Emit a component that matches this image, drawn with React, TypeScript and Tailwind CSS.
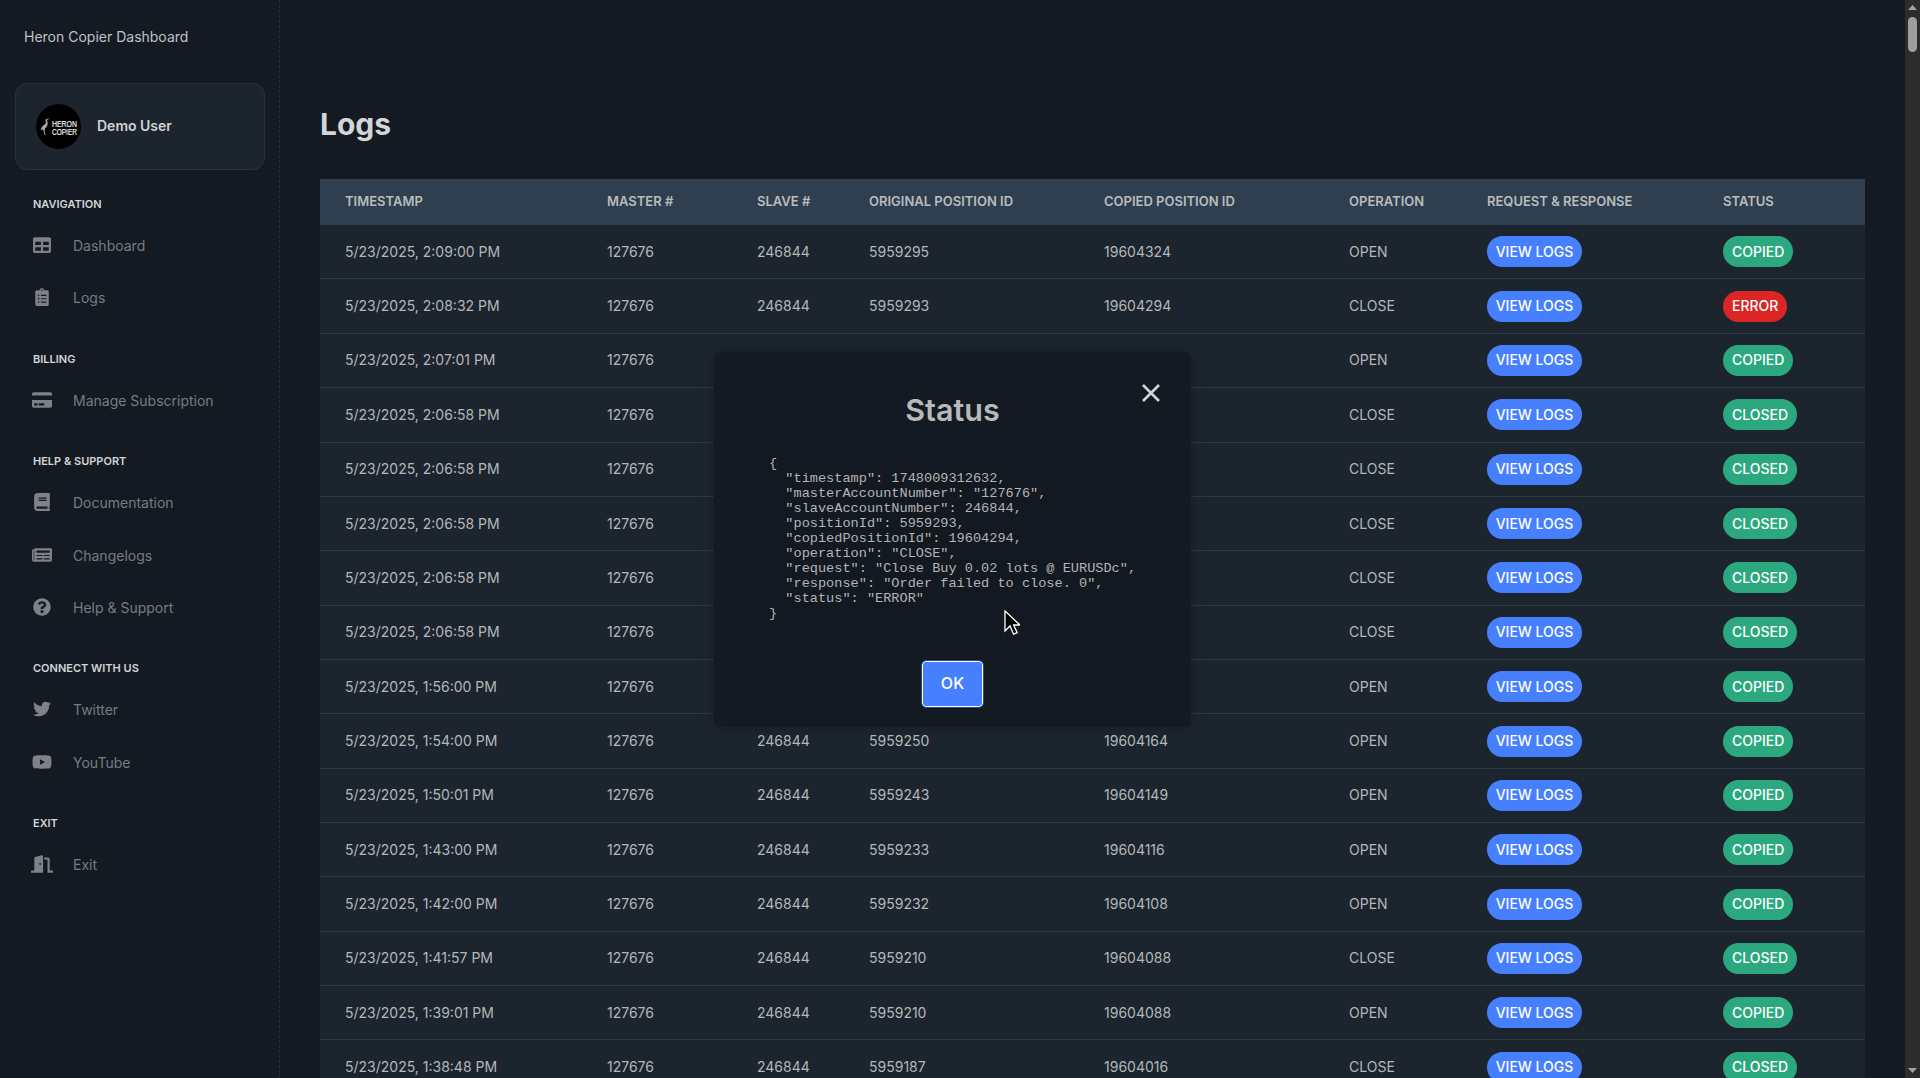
import type { ReactNode } from "react";
import {
  FaBook,
  FaClipboardList,
  FaCreditCard,
  FaDoorOpen,
  FaNewspaper,
  FaQuestionCircle,
  FaTable,
  FaTwitter,
  FaYoutube,
} from "react-icons/fa";

type Status = "COPIED" | "CLOSED" | "ERROR";
type Row = [string, string, string, string, string, Status];

// rows 3-9 sit behind the modal, so their middle cells stay empty
const rows: Row[] = [
  ["5/23/2025, 2:09:00 PM", "246844", "5959295", "19604324", "OPEN", "COPIED"],
  ["5/23/2025, 2:08:32 PM", "246844", "5959293", "19604294", "CLOSE", "ERROR"],
  ["5/23/2025, 2:07:01 PM", "", "", "", "OPEN", "COPIED"],
  ["5/23/2025, 2:06:58 PM", "", "", "", "CLOSE", "CLOSED"],
  ["5/23/2025, 2:06:58 PM", "", "", "", "CLOSE", "CLOSED"],
  ["5/23/2025, 2:06:58 PM", "", "", "", "CLOSE", "CLOSED"],
  ["5/23/2025, 2:06:58 PM", "", "", "", "CLOSE", "CLOSED"],
  ["5/23/2025, 2:06:58 PM", "", "", "", "CLOSE", "CLOSED"],
  ["5/23/2025, 1:56:00 PM", "", "", "", "OPEN", "COPIED"],
  ["5/23/2025, 1:54:00 PM", "246844", "5959250", "19604164", "OPEN", "COPIED"],
  ["5/23/2025, 1:50:01 PM", "246844", "5959243", "19604149", "OPEN", "COPIED"],
  ["5/23/2025, 1:43:00 PM", "246844", "5959233", "19604116", "OPEN", "COPIED"],
  ["5/23/2025, 1:42:00 PM", "246844", "5959232", "19604108", "OPEN", "COPIED"],
  ["5/23/2025, 1:41:57 PM", "246844", "5959210", "19604088", "CLOSE", "CLOSED"],
  ["5/23/2025, 1:39:01 PM", "246844", "5959210", "19604088", "OPEN", "COPIED"],
  ["5/23/2025, 1:38:48 PM", "246844", "5959187", "19604016", "CLOSE", "CLOSED"],
];

const columns = [
  ["TIMESTAMP", "w-[262px]"],
  ["MASTER #", "w-[150px]"],
  ["SLAVE #", "w-[112px]"],
  ["ORIGINAL POSITION ID", "w-[235px]"],
  ["COPIED POSITION ID", "w-[245px]"],
  ["OPERATION", "w-[138px]"],
  ["REQUEST & RESPONSE", "w-[236px]"],
  ["STATUS", "w-[167px]"],
];

const json = `{
  "timestamp": 1748009312632,
  "masterAccountNumber": "127676",
  "slaveAccountNumber": 246844,
  "positionId": 5959293,
  "copiedPositionId": 19604294,
  "operation": "CLOSE",
  "request": "Close Buy 0.02 lots @ EURUSDc",
  "response": "Order failed to close. 0",
  "status": "ERROR"
}`;

function Logo() {
  return (
    <svg viewBox="0 0 45 45" className="h-[45px] w-[45px] shrink-0 overflow-visible">
      <circle cx="22.5" cy="22.5" r="22.5" fill="#000" />
      <path
        d="M14 14.300L10 15.200C9 15.600 9.300 16.600 9.800 17.600C10.400 19 9.600 20 8 21C6 22.300 5 24 4.800 26.500C5.600 25.800 6.300 25.400 7 25.200L7.800 28L8.600 31L9.600 31L8.600 27.600L9 24.500C11 23 12 21 11.600 18.600C11.400 17.500 11 16.600 11.200 16Z"
        fill="#a8a8a8"
      />
      <text x="16" y="22.800" fontSize="9.500" fontWeight="400" stroke="#f2f2f2" strokeWidth="0.2" fill="#f2f2f2" textLength="25" lengthAdjust="spacingAndGlyphs" fontFamily="'Liberation Sans', sans-serif">
        HERON
      </text>
      <text x="16" y="30.500" fontSize="9.500" fontWeight="400" stroke="#f2f2f2" strokeWidth="0.2" fill="#f2f2f2" textLength="25" lengthAdjust="spacingAndGlyphs" fontFamily="'Liberation Sans', sans-serif">
        COPIER
      </text>
    </svg>
  );
}

function Section({ title, children }: { title: string; children: ReactNode }) {
  return (
    <div className="mb-[24.4px]">
      <h3 className="mb-[5px] h-[21px] pl-[33px] text-[11px] leading-[21px] font-semibold text-[#d3d5d7]">
        {title}
      </h3>
      {children}
    </div>
  );
}

function NavItem({ icon, label }: { icon: ReactNode; label: string }) {
  return (
    <a className="flex h-[52.2px] items-center pl-[33px] text-sm text-[#787c81]">
      <span className="mb-[2px] flex w-[40px] items-center text-[#7e8185]">{icon}</span>
      {label}
    </a>
  );
}

function Sidebar() {
  return (
    <aside className="flex w-[280px] shrink-0 flex-col border-r border-dashed border-[#252d36]">
      <div className="flex h-[83px] items-start pt-[27px] pl-[24px] text-sm leading-5 text-[#bfc2c5]">
        Heron Copier Dashboard
      </div>
      <div className="mx-[15px] mb-[24px] flex h-[87px] w-[250px] shrink-0 items-center gap-4 rounded-xl border border-[#28323d] bg-[#1c252e] pl-[20px]">
        <Logo />
        <span className="pb-px text-sm font-semibold text-[#d0d2d4]">Demo User</span>
      </div>
      <Section title="NAVIGATION">
        <NavItem icon={<FaTable size={18} />} label="Dashboard" />
        <NavItem icon={<FaClipboardList size={18} />} label="Logs" />
      </Section>
      <Section title="BILLING">
        <NavItem icon={<FaCreditCard size={20} className="-ml-px" />} label="Manage Subscription" />
      </Section>
      <Section title="HELP & SUPPORT">
        <NavItem icon={<FaBook size={18} />} label="Documentation" />
        <NavItem icon={<FaNewspaper size={20} className="-ml-px" />} label="Changelogs" />
        <NavItem icon={<FaQuestionCircle size={18} />} label="Help & Support" />
      </Section>
      <Section title="CONNECT WITH US">
        <NavItem icon={<FaTwitter size={18} />} label="Twitter" />
        <NavItem icon={<FaYoutube size={20} className="-ml-px" />} label="YouTube" />
      </Section>
      <Section title="EXIT">
        <NavItem icon={<FaDoorOpen size={22} className="-ml-[2px]" />} label="Exit" />
      </Section>
    </aside>
  );
}

function StatusPill({ status }: { status: Status }) {
  const color = status === "ERROR" ? "bg-[#dc2626]" : "bg-[#2ca87f]";
  return (
    <span className={`inline-flex h-[31px] items-center rounded-full px-[9px] text-sm font-medium text-white ${color}`}>
      {status}
    </span>
  );
}

function LogsTable() {
  return (
    <table className="w-[1545px] table-fixed border-collapse text-left text-sm text-[#b4b7ba]">
      <thead>
        <tr className="h-[45.6px] bg-[#2f3f50]">
          {columns.map(([name, width]) => (
            <th key={name} className={`${width} pb-[2px] pl-[25px] text-[13px] font-semibold text-[#b9bcbf]`}>
              {name}
            </th>
          ))}
        </tr>
      </thead>
      <tbody>
        {rows.map((r, i) => (
          <tr key={i} className="h-[54.36px] border-b border-[#2b3744] bg-[#1c252e]">
            <td className="pl-[25px]">{r[0]}</td>
            <td className="pl-[25px]">127676</td>
            <td className="pl-[25px]">{r[1]}</td>
            <td className="pl-[25px]">{r[2]}</td>
            <td className="pl-[25px]">{r[3]}</td>
            <td className="pl-[25px]">{r[4]}</td>
            <td className="pl-[25px]">
              <button className="inline-flex h-[31px] w-[95px] items-center justify-center rounded-full bg-[#4680ff] text-sm font-medium text-white">
                VIEW LOGS
              </button>
            </td>
            <td className="pl-[25px]">
              <StatusPill status={r[5]} />
            </td>
          </tr>
        ))}
      </tbody>
    </table>
  );
}

function Modal() {
  return (
    <div className="absolute top-[352px] left-[714px] flex h-[375px] w-[477px] flex-col items-center rounded-md bg-[#141a21] shadow-[0_0_12px_rgba(0,0,0,0.25)]">
      <button className="absolute top-[31px] right-[30px] text-[#d4d4d4]" aria-label="close">
        <svg viewBox="0 0 20 20" className="h-5 w-5" fill="none" stroke="currentColor" strokeWidth="2.6">
          <path d="M2 2l16 16M18 2L2 18" />
        </svg>
      </button>
      <h2 className="mt-[35px] h-[46px] text-[30.500px] leading-[46px] font-semibold text-[#b9b9b9]">Status</h2>
      <pre className="mt-[14px] h-[183px] w-[385px] rounded bg-[#131920] pt-[9px] pl-[9px] font-['Liberation_Mono',monospace] text-[13.600px] leading-[15px] text-[#b4b4b4]">
        {json}
      </pre>
      <button className="mt-[31px] h-[46px] w-[61px] rounded-[4px] border border-white bg-[#4680ff] pb-[2px] text-base font-medium text-white outline outline-1 outline-[#2a4d99]">
        OK
      </button>
    </div>
  );
}

function Cursor() {
  return (
    <svg viewBox="0 0 16 26" className="absolute top-[610px] left-[1004px] h-[26px] w-4">
      <path d="M1 1v20l5-5 3.600 8.200 3.600-1.600L9.600 15H16z" fill="#000" stroke="#fff" strokeWidth="1.300" />
    </svg>
  );
}

function Scrollbar() {
  return (
    <div className="flex w-[15px] shrink-0 flex-col items-center justify-between bg-[#2c2c2c] py-[5px]">
      <div className="flex w-full flex-col items-center">
        <svg viewBox="0 0 9 5" className="h-[5px] w-[9px]"><path d="M4.500 0L9 5H0z" fill="#a3a3a3" /></svg>
        <div className="mt-[7px] h-[35px] w-[9px] rounded-full bg-[#9e9e9e]" />
      </div>
      <svg viewBox="0 0 9 5" className="h-[5px] w-[9px]"><path d="M0 0h9L4.500 5z" fill="#a3a3a3" /></svg>
    </div>
  );
}

export default function App() {
  return (
    <div className="relative flex h-[1078px] w-[1920px] overflow-hidden bg-[#141a21] font-['Inter',sans-serif]">
      <Sidebar />
      <main className="min-w-0 flex-1 overflow-hidden pl-[40px]">
        <h1 className="mt-[104px] mb-[27px] h-[48px] text-[30px] leading-[40px] font-bold text-[#d3d5d8]">Logs</h1>
        <LogsTable />
      </main>
      <Scrollbar />
      <Modal />
      <Cursor />
    </div>
  );
}
